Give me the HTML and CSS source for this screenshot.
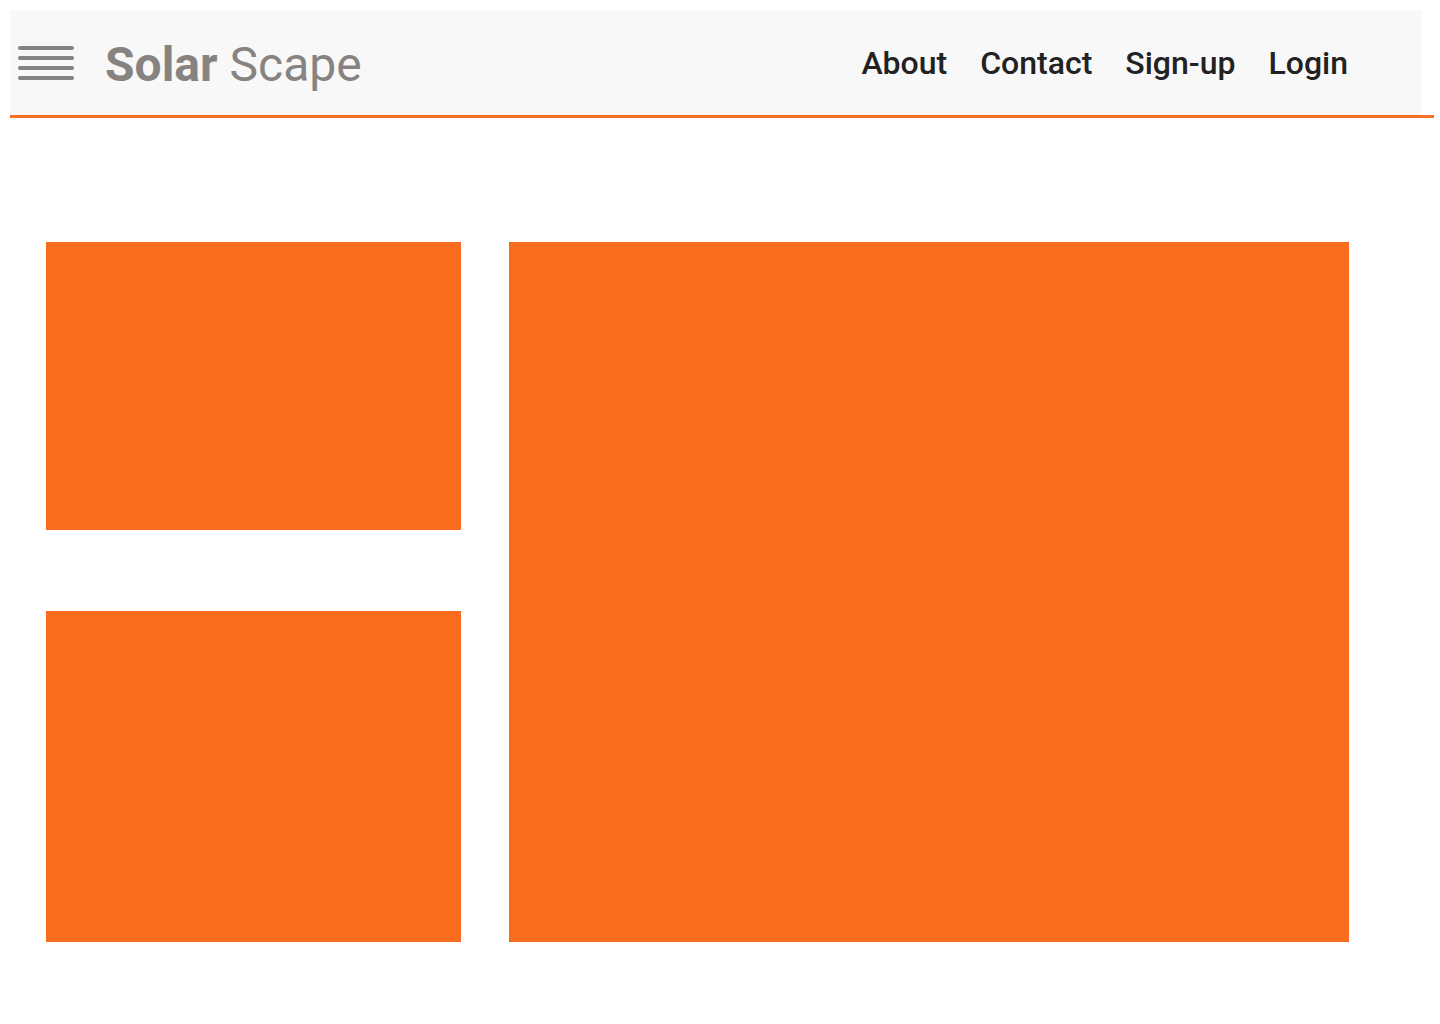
FILE: index.html
```html
<!DOCTYPE html>
<html lang="en">
<head>
<meta charset="utf-8">
<title>Solar Scape</title>
<link rel="stylesheet" href="styles.css">
</head>
<body>
<header class="topbar">
  <div class="bar">
    <button class="menu" aria-label="Menu">
      <svg width="56" height="34" viewBox="0 0 56 34">
        <g stroke="#858280" stroke-width="4" stroke-linecap="round">
          <line x1="2" y1="2" x2="54" y2="2"/>
          <line x1="2" y1="12" x2="54" y2="12"/>
          <line x1="2" y1="22" x2="54" y2="22"/>
          <line x1="2" y1="32" x2="54" y2="32"/>
        </g>
      </svg>
    </button>
    <a class="logo" href="#"><b>Solar</b> Scape</a>
    <nav class="links">
      <a href="#">About</a>
      <a href="#">Contact</a>
      <a href="#">Sign-up</a>
      <a href="#">Login</a>
    </nav>
  </div>
</header>
<main class="content">
  <div class="panel panel-a"></div>
  <div class="panel panel-b"></div>
  <div class="panel panel-main"></div>
</main>
</body>
</html>
```

FILE: styles.css
```css
html, body {
  background: #ffffff;
}
body {
  margin: 10px 6px 0 10px;
  font-family: Roboto, "Liberation Sans", sans-serif;
}
.topbar {
  border-bottom: 3px solid #f4702a;
}
.bar {
  margin-right: 12px;
  height: 105px;
  background: #f8f8f8;
  display: flex;
  align-items: center;
  padding: 0 74px 0 8px;
}
.menu {
  border: 0;
  background: none;
  padding: 0;
  margin: 0;
  display: flex;
  width: 56px;
  height: 34px;
  cursor: pointer;
}
.logo {
  margin-left: 31px;
  padding-top: 3px;
  font-size: 48px;
  color: #878381;
  text-decoration: none;
  font-weight: 400;
  white-space: nowrap;
}
.logo b {
  font-weight: 700;
}
.links {
  margin-left: auto;
  display: flex;
  gap: 33px;
}
.links a {
  font-size: 32px;
  font-weight: 500;
  color: #222222;
  text-decoration: none;
}
.content {
  display: grid;
  grid-template-columns: 415px 840px;
  grid-template-rows: 288px 331px;
  column-gap: 48px;
  row-gap: 81px;
  padding: 124px 0 0 36px;
}
.panel {
  background: #f96c1e;
}
.panel-main {
  grid-column: 2;
  grid-row: 1 / span 2;
}
```
